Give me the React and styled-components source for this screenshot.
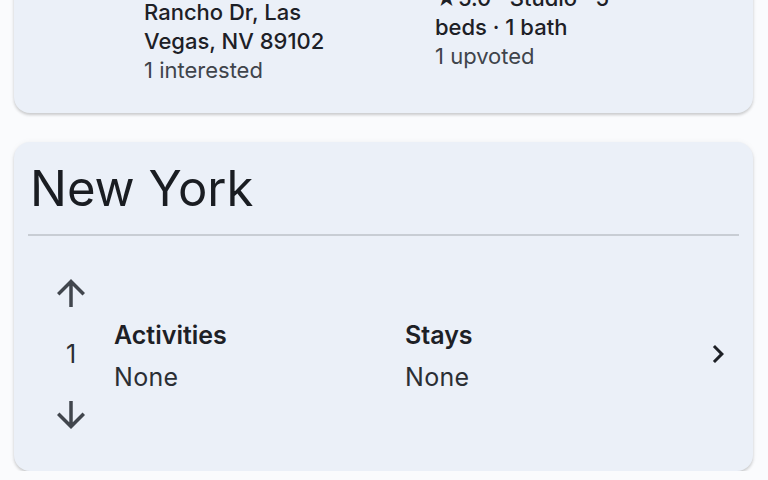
import React from 'react'
import styled, { createGlobalStyle } from 'styled-components'
import { MdArrowUpward, MdArrowDownward, MdChevronRight } from 'react-icons/md'

const GlobalStyle = createGlobalStyle`
  html, body {
    margin: 0;
    padding: 0;
    background: #fafbfd;
    font-family: Inter, "Noto Sans", sans-serif;
    color: #1c1f24;
    overflow: hidden;
  }
`

const listing = {
  left: { lines: ['Cozy Downtown Loft', '1501 N', 'Rancho Dr, Las', 'Vegas, NV 89102'], meta: '1 interested' },
  right: { lines: ['Sunny Studio', '★5.0 · Studio · 5', 'beds · 1 bath'], meta: '1 upvoted' },
}

const App = () => {
  return (
    <>
      <GlobalStyle />
      <Page>
        <ListingCard>
          <ListingRow>
            <ListingCol>
              {listing.left.lines.map((l) => <ListingLine key={l}>{l}</ListingLine>)}
              <ListingMeta>{listing.left.meta}</ListingMeta>
            </ListingCol>
            <ListingCol>
              {listing.right.lines.map((l) => <ListingLine key={l}>{l}</ListingLine>)}
              <ListingMeta>{listing.right.meta}</ListingMeta>
            </ListingCol>
          </ListingRow>
        </ListingCard>

        <Card>
          <CityTitle>New York</CityTitle>
          <Divider />
          <TripRow>
            <Votes>
              <MdArrowUpward size={42} />
              <VoteCount>1</VoteCount>
              <MdArrowDownward size={42} />
            </Votes>
            <Section>
              <SectionTitle>Activities</SectionTitle>
              <SectionValue>None</SectionValue>
            </Section>
            <Section>
              <SectionTitle>Stays</SectionTitle>
              <SectionValue>None</SectionValue>
            </Section>
            <Chevron>
              <MdChevronRight size={36} />
            </Chevron>
          </TripRow>
        </Card>
      </Page>
    </>
  )
}

export default App

const Page = styled.div`
  display: flex;
  flex-direction: column;
  gap: 29px;
  padding: 0 15px 0 14px;
  margin-top: -88px;
`

const Card = styled.div`
  background: #ebf0f8;
  border-radius: 16px;
  box-shadow: 0 2px 3px rgba(0, 0, 0, 0.18), 0 0 6px rgba(0, 0, 0, 0.04);
  padding: 0 14px;
`

const ListingCard = styled(Card)`
  padding: 28px 14px 28px 130px;
`

const ListingRow = styled.div`
  display: grid;
  grid-template-columns: 291px 1fr;
  align-items: center;
`

const ListingCol = styled.div`
  display: flex;
  flex-direction: column;
  font-size: 22px;
  line-height: 29px;
`

const ListingLine = styled.div`
  font-weight: 500;
  color: #1d2026;
`

const ListingMeta = styled.div`
  font-weight: 400;
  color: #3f444b;
`

const CityTitle = styled.div`
  font-size: 49px;
  font-weight: 400;
  padding: 17px 2px 0;
  color: #1a1d22;
`

const Divider = styled.div`
  height: 2px;
  background: #c8cdd4;
  margin-top: 16px;
`

const TripRow = styled.div`
  display: grid;
  grid-template-columns: 86px 291px 1fr 40px;
  align-items: center;
  height: 235px;
`

const Votes = styled.div`
  display: flex;
  flex-direction: column;
  align-items: center;
  color: #41464d;
  gap: 20px;
`

const VoteCount = styled.div`
  font-size: 25px;
  line-height: 20px;
  padding: 10px 0;
  color: #2a2e34;
`

const Section = styled.div`
  display: flex;
  flex-direction: column;
  gap: 12px;
  padding-top: 5px;
`

const SectionTitle = styled.div`
  font-size: 25px;
  font-weight: 600;
  color: #1d2026;
`

const SectionValue = styled.div`
  font-size: 25px;
  color: #2a2e34;
  letter-spacing: 0.3px;
`

const Chevron = styled.div`
  display: flex;
  align-items: center;
  color: #1d2026;
  margin-left: 1px;
`
